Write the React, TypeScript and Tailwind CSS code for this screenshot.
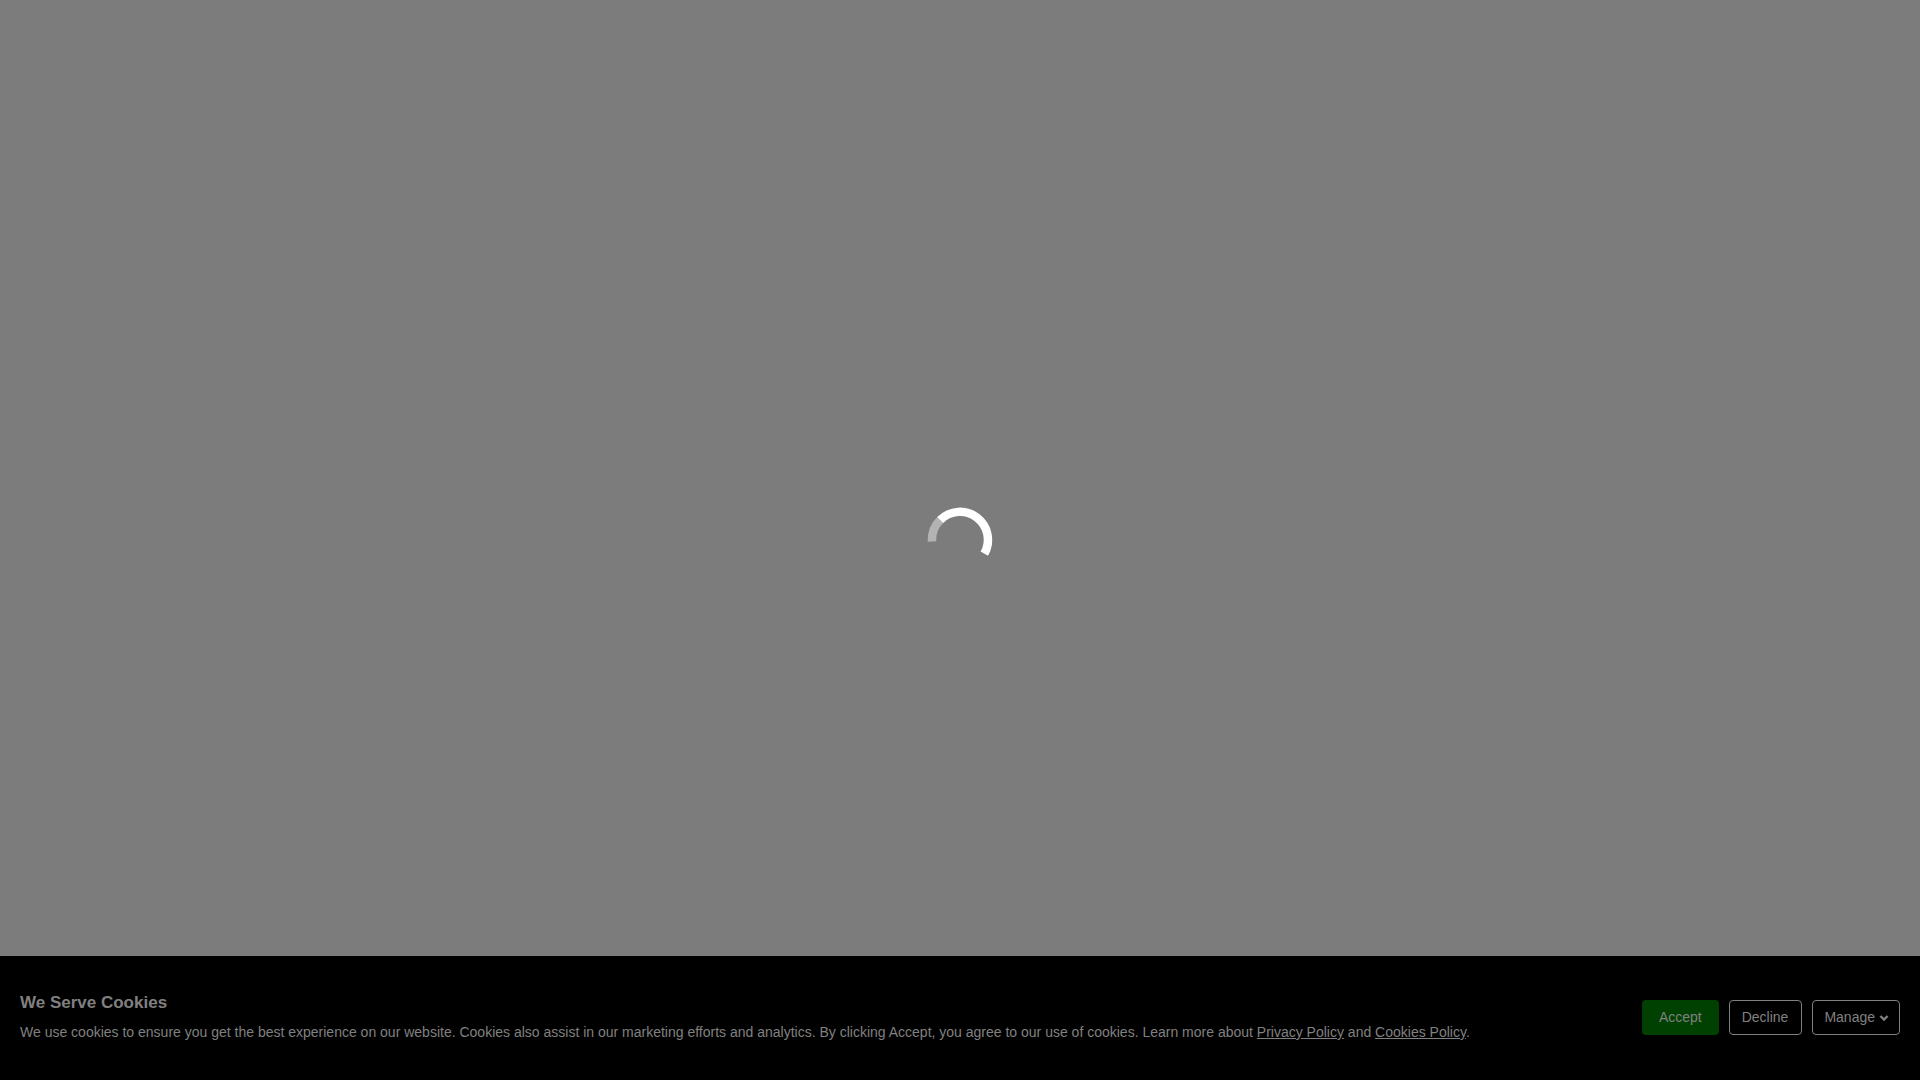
import React from "react";

function Spinner() {
  return (
    <svg role="img" aria-label="Loading" viewBox="0 0 64 64" className="size-16 overflow-visible" fill="none" strokeWidth="8.5">
      <path d="M4 33.5A28 28 0 0 1 12.4 11.8" stroke="#b3b3b3" />
      <path d="M12.2 12A28 28 0 0 1 56.3 45.7" stroke="#ffffff" />
    </svg>
  );
}

function CookieBar() {
  return (
    <section
      aria-label="Cookies"
      className="flex min-h-31 items-center justify-between gap-10 bg-black px-5 pt-[31px] pb-8 text-[#808080]"
    >
      <div className="pb-[2px]">
        <h2 className="mb-[7px] text-[17px] leading-6 font-bold">We Serve Cookies</h2>
        <p className="text-sm leading-5">
          We use cookies to ensure you get the best experience on our website. Cookies also assist in our marketing
          efforts and analytics. By clicking Accept, you agree to our use of cookies. Learn more about{" "}
          <a href="#privacy" className="underline">Privacy Policy</a> and{" "}
          <a href="#cookies" className="underline">Cookies Policy</a>.
        </p>
      </div>
      <div className="flex shrink-0 gap-[10px] text-sm leading-5">
        <button type="button" className="h-[35px] rounded bg-[#004000] px-[17px] pb-[2px]">Accept</button>
        <button type="button" className="h-[35px] rounded border border-[#808080] pr-[13px] pb-[2px] pl-3">Decline</button>
        <button type="button" className="flex h-[35px] items-center gap-[5px] rounded border border-[#808080] px-[11px] pb-[2px]">
          Manage
          <svg viewBox="0 0 8 6" className="mt-[3px] h-[6px] w-2 overflow-visible" fill="none" stroke="currentColor" strokeWidth="2.3" aria-hidden="true">
            <path d="M.4 1 4 4.6 7.6 1" />
          </svg>
        </button>
      </div>
    </section>
  );
}

export default function App() {
  return (
    <div className="flex min-h-screen flex-col bg-[#7c7c7c] font-['Liberation_Sans',Arial,sans-serif]">
      <main className="flex-1" />
      <CookieBar />
      <div className="pointer-events-none fixed inset-0 flex items-center justify-center">
        <Spinner />
      </div>
    </div>
  );
}
